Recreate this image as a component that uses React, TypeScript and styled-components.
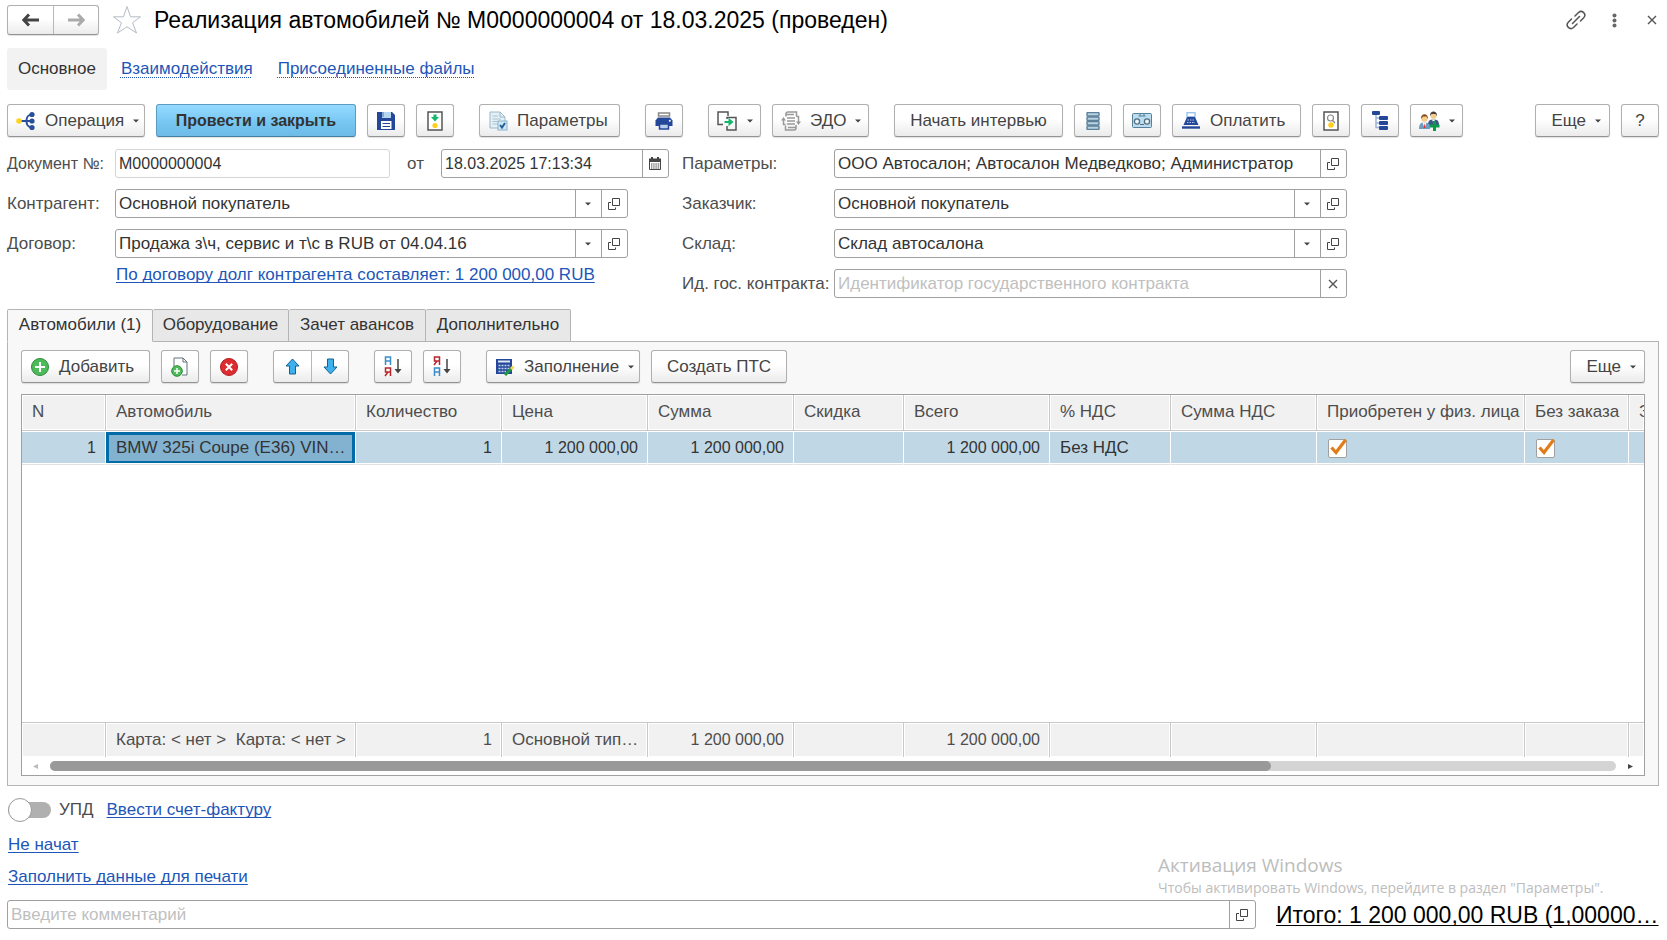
import React from 'react';
import styled, { createGlobalStyle, css } from 'styled-components';

const GlobalStyle = createGlobalStyle`
  *, *::before, *::after { box-sizing: border-box; }
  body { margin: 0; background: #fff; }
  body, button, input { font-family: "Liberation Sans", Arial, sans-serif; font-size: 17px; line-height: 20px; color: #333; }
  svg { display: block; flex: none; }
`;

const Page = styled.div`
  display: flex;
  flex-direction: column;
  min-height: 100vh;
  padding: 5px 8px 11px 7px;
`;

const Header = styled.header`
  display: flex;
  align-items: center;
  height: 30px;
`;

const surface = css`
  border: 1px solid #b0b0b0;
  border-bottom-color: #939393;
  border-radius: 3px;
  background: linear-gradient(#fff 45%, #ebebeb);
  box-shadow: 0 1px 1px rgba(0, 0, 0, 0.12);
`;

const Segmented = styled.div<{ $height: number }>`
  ${surface}
  display: flex;
  height: ${(p) => p.$height}px;
`;

const Segment = styled.button<{ $width: number }>`
  display: flex;
  align-items: center;
  justify-content: center;
  width: ${(p) => p.$width}px;
  padding: 0;
  border: 0;
  background: none;
  & + & { border-left: 1px solid #b8b8b8; }
`;

const PlainButton = styled.button`
  display: flex;
  align-items: center;
  justify-content: center;
  width: 14px;
  padding: 0;
  border: 0;
  background: none;
`;

const StarButton = styled(PlainButton)`
  width: 30px;
  margin: 0 12px 0 13px;
`;

const Title = styled.h1`
  margin: 0;
  flex: 1;
  font-size: 23px;
  line-height: 30px;
  font-weight: 400;
  color: #000;
  white-space: nowrap;
`;

const WindowActions = styled.div`
  display: flex;
  align-items: center;
  gap: 24px;
`;

const Nav = styled.nav`
  display: flex;
  align-items: center;
  gap: 25px;
  margin-top: 13px;
`;

const NavCurrent = styled.span`
  margin-right: -11px;
  padding: 11px;
  border-radius: 3px;
  background: #f2f2f2;
`;

const TextLink = styled.a<{ $dotted?: boolean }>`
  color: #1d56b8;
  text-decoration: underline ${(p) => (p.$dotted ? 'dotted' : 'solid')} 1px;
  text-underline-offset: ${(p) => (p.$dotted ? 3 : 2)}px;
  text-decoration-skip-ink: none;
`;

const Toolbar = styled.div`
  display: flex;
  gap: 25px;
`;

const MainToolbar = styled(Toolbar)`
  margin-top: 14px;
`;

const Group = styled.div<{ $end?: boolean }>`
  display: flex;
  gap: 11px;
  ${(p) => p.$end && 'margin-left: auto;'}
`;

const Button = styled.button<{ $primary?: boolean; $icon?: boolean; $width?: number }>`
  ${surface}
  display: flex;
  align-items: center;
  justify-content: ${(p) => (p.$icon ? 'space-between' : 'center')};
  gap: 9px;
  height: 33px;
  width: ${(p) => p.$width ?? 38}px;
  padding: 0 8px;
  color: #444;
  white-space: nowrap;
  ${(p) =>
    p.$primary &&
    css`
      border-color: #5b9cc0;
      border-bottom-color: #44809f;
      background: linear-gradient(#96dbff, #74c5f2 60%, #6fbbe6);
      color: #333;
      font-size: 16px;
      font-weight: 700;
    `}
`;

const ButtonText = styled.span<{ $center?: boolean }>`
  flex: 1;
  text-align: ${(p) => (p.$center ? 'right' : 'left')};
`;

const Form = styled.div`
  display: grid;
  grid-template-columns: minmax(0, 662px) minmax(0, 665px);
  column-gap: 13px;
  margin-top: 12px;
`;

const FormColumn = styled.div`
  display: flex;
  flex-direction: column;
  gap: 11px;
`;

const FormRow = styled.div<{ $label: number }>`
  display: grid;
  grid-template-columns: ${(p) => p.$label}px minmax(0, 513px);
  align-items: center;
  height: 29px;
`;

const DocumentRow = styled.div`
  display: grid;
  grid-template-columns: 108px minmax(0, 275px) 51px minmax(0, 228px);
  align-items: center;
  height: 29px;
`;

const Label = styled.label<{ $center?: boolean; $small?: boolean }>`
  color: #4d4d4d;
  white-space: nowrap;
  text-align: ${(p) => (p.$center ? 'center' : 'left')};
  ${(p) => p.$small && 'font-size: 16px;'}
`;

const FieldBox = styled.div<{ $muted?: boolean }>`
  display: flex;
  min-width: 0;
  height: 29px;
  border: 1px solid ${(p) => (p.$muted ? '#d4d4d4' : '#a0a0a0')};
  border-radius: 3px;
  background: #fff;
  overflow: hidden;
`;

const TextInput = styled.input<{ $numeric?: boolean }>`
  flex: 1;
  min-width: 0;
  padding: 0 3px;
  border: 0;
  outline: 0;
  background: none;
  ${(p) => p.$numeric && 'font-size: 16px;'}
  &::placeholder { color: #bfbfbf; opacity: 1; }
`;

const FieldButton = styled.button`
  display: flex;
  align-items: center;
  justify-content: center;
  width: 26px;
  padding: 0 2px 0 0;
  border: 0;
  border-left: 1px solid #a0a0a0;
  background: none;
`;

const DebtNote = styled.div`
  display: flex;
  height: 20px;
  margin: -4px 0 0 109px;
`;

const Tabs = styled.div`
  display: flex;
  margin-top: 11px;
`;

const Tab = styled.button<{ $active?: boolean; $width: number }>`
  width: ${(p) => p.$width}px;
  height: 33px;
  margin-bottom: -1px;
  padding: 0 0 2px;
  border: 1px solid #b4b4b4;
  border-left-width: ${(p) => (p.$active ? 1 : 0)}px;
  border-radius: 2px 2px 0 0;
  ${(p) => p.$active && 'border-bottom-color: #f8f8f8;'}
  background: ${(p) => (p.$active ? '#f8f8f8' : '#e8e8e8')};
  white-space: nowrap;
  z-index: 1;
`;

const Panel = styled.section`
  flex: 1;
  display: flex;
  flex-direction: column;
  padding: 8px 13px 9px;
  border: 1px solid #b4b4b4;
  background: #f8f8f8;
`;

const TableFrame = styled.div`
  flex: 1;
  display: flex;
  flex-direction: column;
  min-height: 200px;
  margin-top: 11px;
  border: 1px solid #a0a0a0;
  background: #fff;
  overflow: hidden;
`;

const Table = styled.table`
  flex: 1;
  width: 100%;
  table-layout: fixed;
  border-collapse: separate;
  border-spacing: 0;
`;

const cell = css<{ $right?: boolean }>`
  padding: 0 ${(p) => (p.$right ? 9 : 0)}px 0 10px;
  font-size: ${(p) => (p.$right ? 16 : 17)}px;
  font-weight: 400;
  text-align: ${(p) => (p.$right ? 'right' : 'left')};
  white-space: pre;
  overflow: hidden;
`;

const HeadCell = styled.th`
  ${cell}
  height: 36px;
  padding-bottom: 2px;
  border-right: 1px solid #c8c8c8;
  border-bottom: 1px solid #c8c8c8;
  background: #f1f1f1;
  box-shadow: inset 0 0 0 1px #fff;
  color: #4d4d4d;
  &:last-child { border-right: 0; }
`;

const BodyCell = styled.td<{ $right?: boolean; $selected?: boolean }>`
  ${cell}
  height: 34px;
  border: 0 solid #fff;
  border-width: 1px 1px 1px 0;
  border-bottom-color: #e2e2e2;
  background: ${(p) => (p.$selected ? '#82b2d0' : '#c0d8e6')};
  box-shadow: ${(p) => (p.$selected ? 'inset 0 -1px #fff, inset 0 0 0 3px #006ba6' : 'inset 0 -1px #fff')};
  &:last-child { border-right: 0; }
`;

const FootCell = styled.td`
  ${cell}
  height: 35px;
  border-top: 1px solid #c8c8c8;
  border-right: 1px solid #c8c8c8;
  background: #f1f1f1;
  box-shadow: inset 0 0 0 1px #fff;
  color: #4d4d4d;
  &:last-child { border-right: 0; }
`;

const CheckWrap = styled.span`
  display: grid;
  width: 19px;
  margin-left: 1px;
  > * { grid-area: 1 / 1; }
  > svg { pointer-events: none; }
`;

const CheckInput = styled.input`
  appearance: none;
  width: 19px;
  height: 19px;
  margin: 0;
  border: 1px solid #a0a0a0;
  border-radius: 2px;
  background: #fff;
`;

const ScrollBar = styled.div`
  display: flex;
  align-items: center;
  gap: 12px;
  height: 18px;
  padding: 0 11px;
`;

const ScrollTrack = styled.div`
  flex: 1;
  height: 10px;
  border-radius: 5px;
  background: #d4d4d4;
`;

const ScrollThumb = styled.div`
  width: 78%;
  height: 10px;
  border-radius: 5px;
  background: #999;
`;

const InvoiceRow = styled.div`
  display: flex;
  align-items: center;
  height: 26px;
  margin-top: 11px;
`;

const SwitchLabel = styled.label`
  display: flex;
  align-items: center;
  gap: 8px;
  margin-right: 13px;
  color: #4d4d4d;
`;

const SwitchInput = styled.input`
  appearance: none;
  display: flex;
  align-items: center;
  width: 43px;
  height: 16px;
  margin: 0 0 0 1px;
  border-radius: 8px;
  background: #b0b0b0;
  &::before {
    content: '';
    width: 24px;
    height: 24px;
    border: 1px solid #999;
    border-radius: 50%;
    background: #fff;
  }
`;

const LinkRow = styled.div`
  display: flex;
  height: 20px;
  margin: 12px 0 0 1px;
`;

const Bottom = styled.footer`
  display: flex;
  align-items: flex-end;
  gap: 20px;
  margin-top: 13px;
`;

const CommentBox = styled(FieldBox)`
  flex: 1;
`;

const Total = styled.a`
  width: 383px;
  font-size: 23px;
  line-height: 27px;
  color: #000;
  white-space: nowrap;
  text-decoration: underline 1px;
  text-underline-offset: 2px;
  text-decoration-skip-ink: none;
`;

const Activation = styled.aside`
  position: absolute;
  right: 48px;
  bottom: 42px;
  width: 461px;
  font-family: "Open Sans", "Noto Sans", sans-serif;
  color: #bdbdbd;
  white-space: nowrap;
  pointer-events: none;
`;

const ActivationTitle = styled.div`
  font-size: 19px;
  line-height: 26px;
`;

const ActivationText = styled.div`
  font-size: 14px;
  line-height: 20px;
`;

const Svg = ({ w, h = w, children }: { w: number; h?: number; children: React.ReactNode }) => (
  <svg width={w} height={h} viewBox={`0 0 ${w} ${h}`} fill="none" aria-hidden="true">{children}</svg>
);

const Caret = () => <Svg w={6} h={4}><path d="M0 0.5h6L3 3.5z" fill="#444" /></Svg>;

const ArrowLeft = ({ color }: { color: string }) => (
  <Svg w={18} h={14}><path d="M7 1.5L1.8 7L7 12.5M2 7H17" stroke={color} strokeWidth="3" /></Svg>
);
const ArrowRight = ({ color }: { color: string }) => (
  <Svg w={18} h={14}><path d="M11 1.5L16.2 7L11 12.5M16 7H1" stroke={color} strokeWidth="3" /></Svg>
);
const Star = () => (
  <Svg w={30}><path d="M15 1.5L18.5 11.8H28.5L20.6 17.8L24.5 28L15 21.8L5.5 28L9.4 17.8L1.500 11.800H11.500Z" stroke="#b4bcc4" /></Svg>
);
const LinkIcon = () => (
  <Svg w={20}><g stroke="#555" strokeWidth="1.5" strokeLinecap="round"><path d="M6.5 13.5L13.5 6.5M9 6L12.5 2.5C16 -0.5 21 4 17.7 7.8L14.5 11M11 14L7.5 17.5C4 20.5 -1 16 2.3 12.2L5.5 9" /></g></Svg>
);
const Dots = () => <Svg w={5} h={15}><g fill="#666"><circle cx="2.5" cy="2.5" r="2" /><circle cx="2.5" cy="7.5" r="2" /><circle cx="2.5" cy="12.5" r="2" /></g></Svg>;
const Cross = () => <Svg w={10}><path d="M1 1L9 9M9 1L1 9" stroke="#555" strokeWidth="1.4" /></Svg>;
const OpenIcon = () => (
  <Svg w={12}><path d="M4.5 0.5H11.5V7.5H4.5ZM3 4.5H0.5V11.5H7.5V9.5" stroke="#444" /></Svg>
);
const Calendar = () => (
  <Svg w={12} h={13}>
    <path d="M0.5 2.5H11.5V12.5H0.5Z" stroke="#444" /><path d="M0 1.500H12V5H0Z" fill="#444" />
    <path d="M3 0V3M9 0V3" stroke="#444" strokeWidth="2" />
    <path d="M2 7H11M2 9H11M2 11H11" stroke="#444" strokeWidth="1.200" strokeDasharray="1.400 0.800" />
  </Svg>
);
const OperationIcon = () => (
  <Svg w={20}>
    <path d="M4 10H10M16 3.5C11.5 4 10.5 6 10.5 10S11.5 16 16 16.5M10 10H16" stroke="#28509a" strokeWidth="2" />
    <circle cx="3" cy="10" r="2.8" fill="#ffd320" /><g fill="#28509a"><circle cx="16" cy="3.5" r="2.6" /><circle cx="16" cy="10" r="2.6" /><circle cx="16" cy="16.5" r="2.6" /></g>
  </Svg>
);
const Floppy = () => (
  <Svg w={18}>
    <path d="M0 0H15L18 3V18H0Z" fill="#24479a" /><path d="M5 0H14V6H5Z" fill="#b4d6f0" /><path d="M5 0H7V5H5Z" fill="#7ba9d6" />
    <path d="M4 9H14.5V17H4Z" fill="#fff" /><path d="M5.5 11.5H13M5.5 14.5H13" stroke="#24479a" />
  </Svg>
);
const PostIcon = () => (
  <Svg w={16} h={20}><path d="M1 1H15V19H1Z" stroke="#555" strokeWidth="1.5" fill="#fff" /><path d="M6.5 3.5H9.5V6H12L8 10.5L4 6H6.5Z" fill="#12b76a" /><circle cx="8" cy="14.5" r="2.6" fill="#ffcf20" /></Svg>
);
const ParamsIcon = () => (
  <Svg w={20}>
    <path d="M2 1H12L17 6V17H2Z" fill="#e5eff6" stroke="#9ab7cb" /><path d="M12 1V6H17" stroke="#9ab7cb" />
    <path d="M4.5 5H10M4.5 8H13M4.5 10.5H13M4.5 13H10" stroke="#a9c3d4" /><rect x="10" y="10" width="9" height="9" fill="#cfe6f5" stroke="#8ab3cc" />
    <path d="M12 14L14 16.5L17 12" stroke="#24609a" strokeWidth="2" />
  </Svg>
);
const Printer = () => (
  <Svg w={18}>
    <path d="M3.5 1H14.5V4H3.5Z" stroke="#888" strokeWidth="1.5" fill="#fff" /><path d="M3 5.500H15L17.500 8.500V14H0.500V8.500Z" fill="#24479a" />
    <circle cx="14.800" cy="8.700" r="1" fill="#fff" /><path d="M4.500 12H13.500V17H4.500Z" fill="#b9cdea" stroke="#24479a" strokeWidth="1.500" />
  </Svg>
);
const CreateBased = () => (
  <Svg w={21} h={20}>
    <path d="M6 13.500H1V1H11V5" stroke="#555" strokeWidth="1.500" /><path d="M10 8V6.500H19V19H10V15" stroke="#555" strokeWidth="1.500" />
    <path d="M7.500 10H11.500V6.800L16.500 11L11.500 15.200V12H7.500Z" fill="#12b76a" />
  </Svg>
);
const EdoIcon = () => (
  <Svg w={20}>
    <g stroke="#999" strokeWidth="1.500">
      <path d="M5 5.500V3C5 1.500 5.500 1 7 1H15.500V5.500M5 3.500H13M15 14V17C15 18.500 14.500 19 13 19H4.500V14.500M7 16.500H15" />
      <path d="M6 7H14M6 10H14M6 13H14" />
      <path d="M2.500 8V13.500H4.500M17.500 12V5.500H15.500" />
    </g>
    <path d="M0 9.500L2.500 6L5 9.500ZM15 10.500L17.500 14L20 10.500Z" fill="#999" />
  </Svg>
);
const Stack = () => (
  <Svg w={14} h={18}>
    {[0, 4.5, 9, 13.5].map((y) => <rect key={y} x="1" y={y + 0.5} width="12" height="3.5" rx="0.8" fill="#b9d3e2" stroke="#5c8099" strokeWidth="1.4" />)}
  </Svg>
);
const Tape = () => (
  <Svg w={20} h={15}>
    <rect x="0.500" y="0.500" width="19" height="14" rx="1" fill="#bcdcf0" stroke="#54809a" /><path d="M6.500 3H13.500M8 1V3M12 1V3" stroke="#54809a" />
    <circle cx="5" cy="8.500" r="2.600" fill="#e8f4fb" stroke="#54707f" strokeWidth="1.300" /><circle cx="15" cy="8.500" r="2.600" fill="#e8f4fb" stroke="#54707f" strokeWidth="1.300" /><path d="M8 11.500H12" stroke="#54707f" />
  </Svg>
);
const Register = () => (
  <Svg w={20} h={17}>
    <rect x="6" y="0.700" width="8" height="4" fill="#fff" stroke="#9fc4ea" strokeWidth="1.400" /><path d="M6 5H14L17.500 13H2.500Z" fill="#24479a" />
    <path d="M6.500 8H13.500M6 10.500H14" stroke="#b7c8ea" strokeDasharray="1.500 1" /><path d="M1 15.500H19" stroke="#24479a" strokeWidth="2.400" />
  </Svg>
);
const ViewDoc = () => (
  <Svg w={16} h={20}><path d="M1 1H15V19H1Z" stroke="#555" strokeWidth="1.500" fill="#fff" /><circle cx="7.500" cy="7" r="3" stroke="#888" strokeWidth="1.200" /><path d="M9.500 9.500L12 12" stroke="#888" strokeWidth="1.200" /><circle cx="8" cy="14" r="2.800" fill="#ffcf20" /></Svg>
);
const Tree = () => (
  <Svg w={16} h={19}><path d="M4 3V16.500H9M4 7H9M4 12H9" stroke="#9db4da" strokeWidth="1.500" /><g fill="#24479a"><rect width="8" height="4" rx="1" /><rect x="7" y="5" width="9" height="4" rx="1" /><rect x="7" y="10" width="9" height="4" rx="1" /><rect x="7" y="15" width="9" height="4" rx="1" /></g></Svg>
);
const People = () => (
  <Svg w={21} h={20}>
    <path d="M9 14C9 9.500 11 8.500 14.500 8.500S20 9.500 20 14Z" fill="#3d5788" /><path d="M13 8.500L14.500 12L16 8.500Z" fill="#fff" />
    <circle cx="14.500" cy="5" r="3" fill="#f4cc8c" /><path d="M11 5C10.500 -1 18.500 -1 18 5L16.500 3H12.500Z" fill="#4b3b36" />
    <path d="M0 18C0 12.500 2 11.500 5.500 11.500S11 12.500 11 18Z" fill="#6e9ec4" /><path d="M3.500 11.500L5.500 17L7.500 11.500Z" fill="#fff" /><path d="M5.500 12L4.700 17H6.300Z" fill="#d33" />
    <circle cx="5.500" cy="7.500" r="3.200" fill="#f6cd88" /><path d="M2 8C1.500 1.500 9.500 1.500 9 8L7.500 5.500H4Z" fill="#85471c" />
    <path d="M15.500 10V20M10.500 15H20.500" stroke="#0a9a4a" strokeWidth="3" />
  </Svg>
);
const AddIcon = () => (
  <Svg w={20}><circle cx="10" cy="10" r="8.500" fill="#4dbb5a" stroke="#2b8b39" /><path d="M10 5V15M5 10H15" stroke="#fff" strokeWidth="2" /></Svg>
);
const CopyAdd = () => (
  <Svg w={18} h={20}><path d="M3 10V1H12L16 5V18H11M12 1V5H16" stroke="#62707c" fill="#fff" /><circle cx="6" cy="14" r="5.300" fill="#4dbb5a" stroke="#2b8b39" /><path d="M6 11V17M3 14H9" stroke="#fff" strokeWidth="1.500" /></Svg>
);
const DeleteIcon = () => (
  <Svg w={18}><circle cx="9" cy="9" r="8.500" fill="#dc2c30" stroke="#b41c20" /><path d="M5.800 5.800L12.200 12.200M12.200 5.800L5.800 12.200" stroke="#fff" strokeWidth="2" /></Svg>
);
const UpIcon = () => <Svg w={15} h={17}><path d="M7.500 1L14 8H10.500V16H4.500V8H1Z" fill="#3fb0ee" stroke="#14608f" /></Svg>;
const DownIcon = () => <Svg w={15} h={17}><path d="M7.500 16L14 9H10.500V1H4.500V9H1Z" fill="#3fb0ee" stroke="#14608f" /></Svg>;
const GlyphTop = ({ y, flip }: { y: number; flip?: boolean }) =>
  flip ? (
    <path d={`M6.500 ${y + 9}V${y + 1}H1.500V${y + 5}H6.500M4 ${y + 5}L1 ${y + 9}`} stroke="#b8262c" strokeWidth="1.500" />
  ) : (
    <path d={`M1.500 ${y + 9}V${y + 1}H6.500V${y + 9}M1.500 ${y + 5}H6.500`} stroke="#3a8cc8" strokeWidth="1.500" />
  );
const SortIcon = ({ desc }: { desc?: boolean }) => (
  <Svg w={18} h={21}><GlyphTop y={0} flip={desc} /><GlyphTop y={11} flip={!desc} /><path d="M14 3V15" stroke="#444" strokeWidth="1.500" /><path d="M10.500 13H17.500L14 17.500Z" fill="#444" /></Svg>
);
const FillIcon = () => (
  <Svg w={20} h={18}>
    <rect x="1.500" y="1.500" width="15" height="14" fill="#24479a" stroke="#24479a" /><path d="M3 3.500H15" stroke="#dce8f6" strokeWidth="2" />
    <path d="M3.500 7.500H15M3.500 10.500H15M3.500 13.500H11" stroke="#c3d4ec" strokeWidth="1.600" strokeDasharray="2 1" /><path d="M10 17L16 11" stroke="#1e9a3c" strokeWidth="3" /><path d="M16 11L18.500 8.500" stroke="#f2d84a" strokeWidth="3" />
  </Svg>
);
const CheckMark = () => <Svg w={19}><path d="M3.500 8.500L8 13.500L17.500 1" stroke="#e07c1a" strokeWidth="3.200" /></Svg>;

type FieldProps = {
  id: string;
  label: string;
  labelWidth: number;
  value?: string;
  placeholder?: string;
  dropdown?: boolean;
  clear?: boolean;
};

const Field = ({ id, label, labelWidth, value, placeholder, dropdown, clear }: FieldProps) => (
  <FormRow $label={labelWidth}>
    <Label htmlFor={id}>{label}</Label>
    <FieldBox>
      <TextInput id={id} defaultValue={value} placeholder={placeholder} />
      {dropdown && <FieldButton aria-label="Выбрать"><Caret /></FieldButton>}
      {clear ? <FieldButton aria-label="Очистить"><Cross /></FieldButton> : <FieldButton aria-label="Открыть"><OpenIcon /></FieldButton>}
    </FieldBox>
  </FormRow>
);

const columns = [
  { title: 'N', width: 84, value: '1', total: '', right: true },
  { title: 'Автомобиль', width: 250, value: 'BMW 325i Coupe (E36) VIN…', total: 'Карта: < нет >  Карта: < нет >', selected: true },
  { title: 'Количество', width: 146, value: '1', total: '1', right: true, totalRight: true },
  { title: 'Цена', width: 146, value: '1 200 000,00', total: 'Основной тип…', right: true },
  { title: 'Сумма', width: 146, value: '1 200 000,00', total: '1 200 000,00', right: true, totalRight: true },
  { title: 'Скидка', width: 110, value: '', total: '' },
  { title: 'Всего', width: 146, value: '1 200 000,00', total: '1 200 000,00', right: true, totalRight: true },
  { title: '% НДС', width: 121, value: 'Без НДС', total: '' },
  { title: 'Сумма НДС', width: 146, value: '', total: '' },
  { title: 'Приобретен у физ. лица', width: 208, check: true, total: '' },
  { title: 'Без заказа', width: 104, check: true, total: '' },
  { title: 'З', value: '', total: '' },
];

const tabs = [
  { title: 'Автомобили (1)', width: 146, active: true },
  { title: 'Оборудование', width: 136 },
  { title: 'Зачет авансов', width: 137 },
  { title: 'Дополнительно', width: 145 },
];

export default function App() {
  return (
    <>
      <GlobalStyle />
      <Page>
        <Header>
          <Segmented $height={30}>
            <Segment $width={45} aria-label="Назад"><ArrowLeft color="#444" /></Segment>
            <Segment $width={45} aria-label="Вперед"><ArrowRight color="#aaa" /></Segment>
          </Segmented>
          <StarButton aria-label="В избранное"><Star /></StarButton>
          <Title>Реализация автомобилей № М0000000004 от 18.03.2025 (проведен)</Title>
          <WindowActions>
            <PlainButton aria-label="Ссылка"><LinkIcon /></PlainButton>
            <PlainButton aria-label="Меню"><Dots /></PlainButton>
            <PlainButton aria-label="Закрыть"><Cross /></PlainButton>
          </WindowActions>
        </Header>

        <Nav>
          <NavCurrent>Основное</NavCurrent>
          <TextLink $dotted href="#interactions">Взаимодействия</TextLink>
          <TextLink $dotted href="#files">Присоединенные файлы</TextLink>
        </Nav>

        <MainToolbar>
          <Group>
            <Button $icon $width={138}><OperationIcon /><ButtonText>Операция</ButtonText><Caret /></Button>
            <Button $primary $width={200}>Провести и закрыть</Button>
            <Button aria-label="Записать"><Floppy /></Button>
            <Button aria-label="Провести"><PostIcon /></Button>
          </Group>
          <Group>
            <Button $icon $width={141}><ParamsIcon /><ButtonText>Параметры</ButtonText></Button>
          </Group>
          <Group>
            <Button aria-label="Печать"><Printer /></Button>
          </Group>
          <Group>
            <Button $icon $width={53} aria-label="Создать на основании"><CreateBased /><Caret /></Button>
            <Button $icon $width={97}><EdoIcon /><ButtonText>ЭДО</ButtonText><Caret /></Button>
          </Group>
          <Group>
            <Button $width={169}>Начать интервью</Button>
            <Button aria-label="Список"><Stack /></Button>
            <Button aria-label="Запись"><Tape /></Button>
            <Button $icon $width={129}><Register /><ButtonText>Оплатить</ButtonText></Button>
            <Button aria-label="Просмотр"><ViewDoc /></Button>
            <Button aria-label="Структура"><Tree /></Button>
            <Button $icon $width={53} aria-label="Участники"><People /><Caret /></Button>
          </Group>
          <Group $end>
            <Button $icon $width={75}><ButtonText $center>Еще</ButtonText><Caret /></Button>
            <Button aria-label="Справка">?</Button>
          </Group>
        </MainToolbar>

        <Form>
          <FormColumn>
            <DocumentRow>
              <Label htmlFor="number" $small>Документ №:</Label>
              <FieldBox $muted><TextInput id="number" $numeric defaultValue="М0000000004" /></FieldBox>
              <Label htmlFor="date" $center>от</Label>
              <FieldBox>
                <TextInput id="date" $numeric defaultValue="18.03.2025 17:13:34" />
                <FieldButton aria-label="Календарь"><Calendar /></FieldButton>
              </FieldBox>
            </DocumentRow>
            <Field id="partner" label="Контрагент:" labelWidth={108} value="Основной покупатель" dropdown />
            <Field id="contract" label="Договор:" labelWidth={108} value="Продажа з\ч, сервис и т\с в RUB от 04.04.16" dropdown />
            <DebtNote><TextLink href="#debt">По договору долг контрагента составляет: 1 200 000,00 RUB</TextLink></DebtNote>
          </FormColumn>
          <FormColumn>
            <Field id="params" label="Параметры:" labelWidth={152} value="ООО Автосалон; Автосалон Медведково; Администратор" />
            <Field id="customer" label="Заказчик:" labelWidth={152} value="Основной покупатель" dropdown />
            <Field id="warehouse" label="Склад:" labelWidth={152} value="Склад автосалона" dropdown />
            <Field id="state" label="Ид. гос. контракта:" labelWidth={152} placeholder="Идентификатор государственного контракта" clear />
          </FormColumn>
        </Form>

        <Tabs role="tablist">
          {tabs.map((t) => (
            <Tab key={t.title} role="tab" aria-selected={!!t.active} $active={t.active} $width={t.width}>{t.title}</Tab>
          ))}
        </Tabs>
        <Panel>
          <Toolbar>
            <Group>
              <Button $icon $width={129}><AddIcon /><ButtonText>Добавить</ButtonText></Button>
              <Button aria-label="Скопировать"><CopyAdd /></Button>
              <Button aria-label="Удалить"><DeleteIcon /></Button>
            </Group>
            <Segmented $height={33}>
              <Segment $width={37} aria-label="Вверх"><UpIcon /></Segment>
              <Segment $width={37} aria-label="Вниз"><DownIcon /></Segment>
            </Segmented>
            <Group>
              <Button aria-label="По возрастанию"><SortIcon /></Button>
              <Button aria-label="По убыванию"><SortIcon desc /></Button>
            </Group>
            <Group>
              <Button $icon $width={154}><FillIcon /><ButtonText>Заполнение</ButtonText><Caret /></Button>
              <Button $width={136}>Создать ПТС</Button>
            </Group>
            <Group $end>
              <Button $icon $width={75}><ButtonText $center>Еще</ButtonText><Caret /></Button>
            </Group>
          </Toolbar>
          <TableFrame>
            <Table>
              <colgroup>
                {columns.map((c) => <col key={c.title} style={{ width: c.width }} />)}
              </colgroup>
              <thead>
                <tr>{columns.map((c) => <HeadCell key={c.title}>{c.title}</HeadCell>)}</tr>
              </thead>
              <tbody>
                <tr>
                  {columns.map((c) => (
                    <BodyCell key={c.title} $right={c.right} $selected={c.selected}>
                      {c.check ? <CheckWrap><CheckInput type="checkbox" defaultChecked aria-label={c.title} /><CheckMark /></CheckWrap> : c.value}
                    </BodyCell>
                  ))}
                </tr>
                <tr><td colSpan={columns.length} /></tr>
              </tbody>
              <tfoot>
                <tr>{columns.map((c) => <FootCell key={c.title} $right={c.totalRight}>{c.total}</FootCell>)}</tr>
              </tfoot>
            </Table>
            <ScrollBar>
              <Svg w={5}><path d="M5 0V5L0 2.500Z" fill="#bbb" /></Svg>
              <ScrollTrack><ScrollThumb /></ScrollTrack>
              <Svg w={5}><path d="M0 0V5L5 2.500Z" fill="#444" /></Svg>
            </ScrollBar>
          </TableFrame>
        </Panel>

        <InvoiceRow>
          <SwitchLabel><SwitchInput type="checkbox" role="switch" />УПД</SwitchLabel>
          <TextLink href="#invoice">Ввести счет-фактуру</TextLink>
        </InvoiceRow>
        <LinkRow><TextLink href="#status">Не начат</TextLink></LinkRow>
        <LinkRow><TextLink href="#print">Заполнить данные для печати</TextLink></LinkRow>
        <Bottom>
          <CommentBox>
            <TextInput aria-label="Комментарий" placeholder="Введите комментарий" />
            <FieldButton aria-label="Открыть"><OpenIcon /></FieldButton>
          </CommentBox>
          <Total href="#total">Итого: 1 200 000,00 RUB (1,00000…</Total>
        </Bottom>
        <Activation>
          <ActivationTitle>Активация Windows</ActivationTitle>
          <ActivationText>Чтобы активировать Windows, перейдите в раздел "Параметры".</ActivationText>
        </Activation>
      </Page>
    </>
  );
}
